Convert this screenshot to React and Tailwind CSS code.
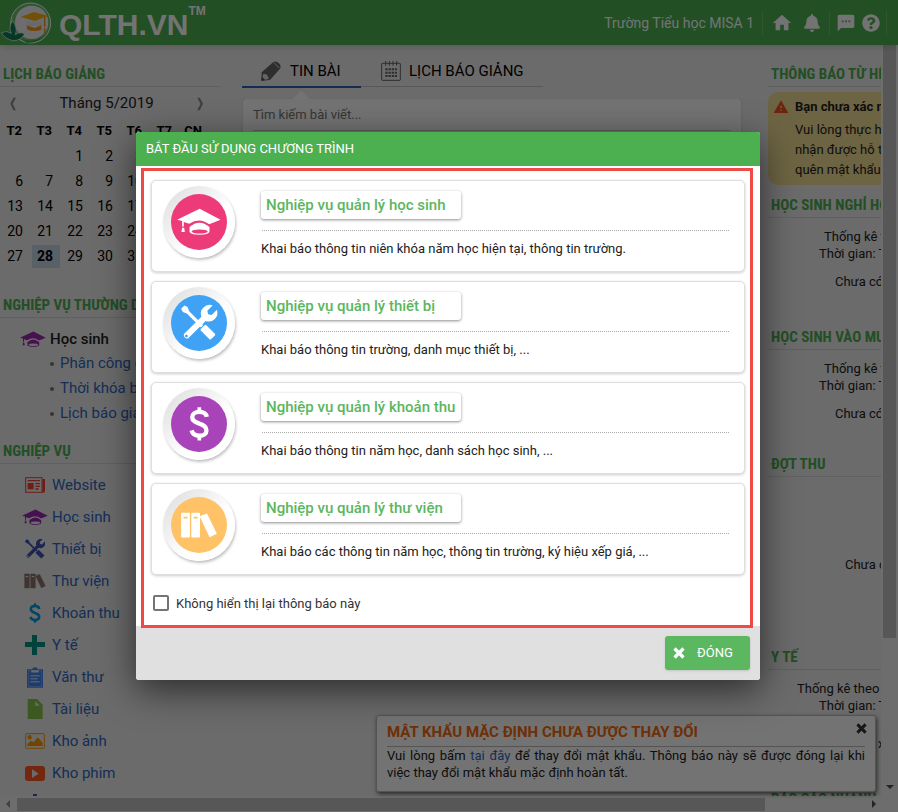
import { useState } from "react";
import { FaBell, FaQuestionCircle } from "react-icons/fa";
import { MdHome, MdSms, MdWarning } from "react-icons/md";

/* ---------- icon shapes, drawn on a 166 x 166 disc ---------- */

function CapShape({ hole }) {
  return (
    <>
      <path d="M18 76L85 44L147 76L113 90Q85 68 54 88L38 83V96H33V80Z" fill="currentColor" />
      <path d="M33 100h6l2 13H31z" fill="currentColor" />
      <path d="M55 98Q84 72 114 98V112Q112 121 85 121Q57 121 55 112Z" fill="currentColor" />
      <ellipse cx="85" cy="111" rx="24" ry="6" fill={hole} />
    </>
  );
}

function ToolsShape({ hole }) {
  return (
    <g transform="translate(83 84)" fill="currentColor">
      <g transform="rotate(45)">
        <path d="M-9 -66A26 26 0 0 0 -9 -19V54A10 10 0 0 0 9 54V-19A26 26 0 0 0 9 -66V-44L0 -38L-9 -44Z" />
        <circle cx="0" cy="53" r="4" fill={hole} />
      </g>
      <g transform="rotate(-45)">
        <path d="M-7 -68H7L10 -58L5 -46V14H-5V-46L-10 -58Z" />
        <rect x="-13" y="14" width="26" height="46" rx="5" stroke={hole} strokeWidth="3" />
      </g>
    </g>
  );
}

function DollarShape() {
  return (
    <g fill="none" stroke="currentColor" strokeWidth="13">
      <path d="M84 33V48M84 117V132" strokeWidth="11" />
      <path d="M106 62C104 51 95 47 84 47C71 47 63 54 63 63C63 74 73 78 84 82C97 86 105 91 105 102C105 112 97 118 84 118C72 118 64 113 61 102" />
    </g>
  );
}

function BooksShape({ hole }) {
  return (
    <>
      <g fill="currentColor">
        <rect x="30" y="47" width="26" height="73" rx="3" />
        <rect x="60" y="47" width="26" height="73" rx="3" />
        <path d="M87 58L106 51L134 108L115 117Z" stroke="currentColor" strokeWidth="3" strokeLinejoin="round" />
      </g>
      <path d="M37 61H49M67 61H79" stroke={hole} strokeWidth="5" />
    </>
  );
}

function CrossIcon({ className }) {
  return (
    <svg className={className} viewBox="0 0 12 12">
      <path d="M1.5 1.5L10.5 10.5M10.5 1.5L1.5 10.5" stroke="currentColor" strokeWidth="3.2" />
    </svg>
  );
}

function Logo() {
  return (
    <svg className="h-[42px] w-[52px]" viewBox="0 0 156 126">
      <circle cx="92" cy="63" r="60" fill="#6fbf73" stroke="#fff" strokeWidth="3" />
      <circle cx="95" cy="61" r="50" fill="#f2f2f2" />
      <path d="M45 98Q70 122 110 113Q132 106 143 88Q120 126 80 122Z" fill="#3ba54b" />
      <path d="M4 92Q20 84 34 94Q24 76 38 56Q54 80 46 98Q60 88 74 96Q62 116 40 116Q16 112 4 92Z" fill="#0d7f55" stroke="#fff" strokeWidth="2" />
      <path d="M62 45L102 30L146 42L104 57Z" fill="#fbb416" />
      <path d="M80 55L104 62L126 55V74L104 70L80 74Z" fill="#e9e9e9" />
      <path d="M80 70L104 78L124 70V83Q104 91 82 83Z" fill="#f59a1d" />
      <path d="M134 46V74M134 78V94" stroke="#f08a1d" strokeWidth="4" />
    </svg>
  );
}

function PencilIcon() {
  return (
    <svg className="size-5" viewBox="0 0 60 60">
      <path d="M1 59L2 34L36 4Q44 -2 53 6Q62 14 57 23L27 57Z" fill="#666" />
      <path d="M6 40Q20 36 23 54L12 56L5 50Z" fill="#ddd" />
      <path d="M1 59L2 48L13 58Z" fill="#555" />
      <path d="M39 5L55 21" stroke="#ddd" strokeWidth="3" />
    </svg>
  );
}

function CalendarIcon() {
  return (
    <svg className="size-5" viewBox="0 0 60 60" fill="none" stroke="#666" strokeWidth="3">
      <rect x="2" y="7" width="56" height="51" rx="2" />
      <path d="M14 0V14M25 0V14M36 0V14M47 0V14" />
      <path d="M13 25H48M13 35H48M13 45H48" strokeWidth="6" strokeDasharray="7 2.5" />
    </svg>
  );
}

const menuIcons = {
  website: (
    <svg className="h-4 w-5" viewBox="0 0 60 48">
      <path d="M52 6H60V42Q60 48 52 48Z" fill="#f44336" />
      <rect x="2" y="2" width="49" height="44" fill="none" stroke="#f44336" strokeWidth="3" />
      <rect x="8" y="18" width="18" height="19" fill="#f44336" />
      <path d="M8 11H45M31 20H45M31 28H45M31 36H41" stroke="#f44336" strokeWidth="4" />
    </svg>
  ),
  student: (
    <svg className="h-4 w-[26px] text-[#9c27b0]" viewBox="18 42 130 80">
      <CapShape hole="#ededed" />
    </svg>
  ),
  device: (
    <svg className="size-5 text-[#3f51b5]" viewBox="30 30 106 106">
      <ToolsShape hole="#ededed" />
    </svg>
  ),
  library: (
    <svg className="h-4 w-[22px] text-[#8d7468]" viewBox="28 45 110 77">
      <BooksShape hole="#ededed" />
    </svg>
  ),
  money: (
    <svg className="h-5 w-3 text-[#039be5]" viewBox="54 32 60 101">
      <DollarShape />
    </svg>
  ),
  health: (
    <svg className="size-5" viewBox="0 0 20 20">
      <path d="M7 0H12V7H20V12H12V20H7V12H0V7H7Z" fill="#009688" />
    </svg>
  ),
  document: (
    <svg className="h-[21px] w-4" viewBox="0 0 48 62">
      <path d="M0 6H15Q18 0 24 0T33 6H48V62H0Z" fill="#4285f4" />
      <rect x="4" y="11" width="40" height="47" fill="none" stroke="#8db4f8" strokeWidth="2" />
      <path d="M13 9H35V16H13Z" fill="#ededed" />
      <path d="M10 26H38M10 35H32M10 44H38" stroke="#ededed" strokeWidth="3" />
    </svg>
  ),
  file: (
    <svg className="h-5 w-4" viewBox="0 0 48 60">
      <path d="M2 0H30L47 17V60H2Z" fill="#8bc34a" />
      <path d="M25 7V20H38Z" fill="#ededed" />
    </svg>
  ),
  photo: (
    <svg className="h-4 w-5" viewBox="0 0 60 48">
      <rect x="2" y="2" width="56" height="44" rx="2" fill="none" stroke="#ff9800" strokeWidth="3" />
      <ellipse cx="14" cy="13" rx="6" ry="7" fill="#ff9800" />
      <path d="M7 39V33L18 23L26 28L38 13L53 29V39Z" fill="#ff9800" />
    </svg>
  ),
  video: (
    <svg className="h-[15px] w-5" viewBox="0 0 60 45">
      <rect width="60" height="45" rx="9" fill="#ff5722" />
      <path d="M21 10L41 23L21 36Z" fill="#ededed" />
    </svg>
  ),
  settings: (
    <svg className="size-[22px]" viewBox="0 0 22 22">
      <path d="M9 0H13V4L18 6V16L11 20L4 16V6L9 4Z" fill="#3f51b5" />
    </svg>
  ),
};

/* ---------- data ---------- */

const weekdays = ["T2", "T3", "T4", "T5", "T6", "T7", "CN"];
const weeks = [
  ["", "", 1, 2, 3, 4, 5],
  [6, 7, 8, 9, 10, 11, 12],
  [13, 14, 15, 16, 17, 18, 19],
  [20, 21, 22, 23, 24, 25, 26],
  [27, 28, 29, 30, 31, "", ""],
];

const menu = [
  { icon: "website", label: "Website" },
  { icon: "student", label: "Học sinh" },
  { icon: "device", label: "Thiết bị" },
  { icon: "library", label: "Thư viện" },
  { icon: "money", label: "Khoản thu" },
  { icon: "health", label: "Y tế" },
  { icon: "document", label: "Văn thư" },
  { icon: "file", label: "Tài liệu" },
  { icon: "photo", label: "Kho ảnh" },
  { icon: "video", label: "Kho phim" },
];

const tasks = [
  {
    title: "Nghiệp vụ quản lý học sinh",
    text: "Khai báo thông tin niên khóa năm học hiện tại, thông tin trường.",
    disc: "bg-[#ec3b78]",
    shape: <CapShape hole="#ec3b78" />,
  },
  {
    title: "Nghiệp vụ quản lý thiết bị",
    text: "Khai báo thông tin trường, danh mục thiết bị, ...",
    disc: "bg-[#3fa2f5]",
    shape: <ToolsShape hole="#3fa2f5" />,
  },
  {
    title: "Nghiệp vụ quản lý khoản thu",
    text: "Khai báo thông tin năm học, danh sách học sinh, ...",
    disc: "bg-[#a843b9]",
    shape: <DollarShape />,
  },
  {
    title: "Nghiệp vụ quản lý thư viện",
    text: "Khai báo các thông tin năm học, thông tin trường, ký hiệu xếp giá, ...",
    disc: "bg-[#ffc266]",
    shape: <BooksShape hole="#ffc266" />,
  },
];

/* ---------- page ---------- */

function SectionTitle({ children, className = "" }) {
  return (
    <h2 className={`h-[26px] border-b border-[#d6d6d6] pt-px pl-[3px] font-['Roboto_Condensed','Liberation_Sans_Narrow',Roboto,sans-serif] text-[15px] leading-[25px] font-bold whitespace-nowrap text-[#4caf50] ${className}`}>
      {children}
    </h2>
  );
}

function Header() {
  return (
    <header className="z-10 flex h-[45px] shrink-0 items-center bg-[#4caf50] text-white shadow-md">
      <a href="#" className="flex items-center">
        <Logo />
        <span className="pt-1 pl-[7px] font-['Liberation_Sans',sans-serif] text-[30px] leading-9 font-bold">QLTH.VN</span>
        <span className="mb-6 font-['Liberation_Sans',sans-serif] text-xs leading-3 font-bold">TM</span>
      </a>
      <div className="ml-auto flex h-6 items-center text-sm">
        <span className="pr-2">Trường Tiểu học MISA 1</span>
        <div className="flex h-6 items-center gap-[10px] border-l border-white/20 px-2">
          <button aria-label="Trang chủ"><MdHome className="size-[22px]" /></button>
          <button aria-label="Thông báo"><FaBell className="size-[18px]" /></button>
        </div>
        <div className="flex h-6 items-center gap-[6px] border-l border-white/20 px-[6px]">
          <button aria-label="Tin nhắn"><MdSms className="size-5" /></button>
          <button aria-label="Trợ giúp"><FaQuestionCircle className="size-[18px]" /></button>
        </div>
        <div className="h-6 w-3 border-l border-white/20" />
      </div>
    </header>
  );
}

function Calendar() {
  return (
    <>
      <div className="flex h-8 items-center justify-between px-2 text-[15px] text-[#222]">
        <button aria-label="Tháng trước" className="text-xs font-bold text-[#888]">❬</button>
        <span>Tháng 5/2019</span>
        <button aria-label="Tháng sau" className="pr-2 text-xs font-bold text-[#888]">❭</button>
      </div>
      <table className="w-[210px] table-fixed text-sm text-black">
        <thead>
          <tr className="h-[25px] text-[13px]">
            {weekdays.map((d) => (
              <th key={d} className="p-0 pr-2 text-right font-bold">{d}</th>
            ))}
          </tr>
        </thead>
        <tbody>
          {weeks.map((week, i) => (
            <tr key={i} className="h-[25px]">
              {week.map((day, j) => (
                <td key={j} className="p-0 pl-[2px] text-right">
                  <span className={`block h-[23px] pr-[7px] leading-[23px] ${day === 28 ? "bg-[#c3d4e6] font-bold" : ""}`}>{day}</span>
                </td>
              ))}
            </tr>
          ))}
        </tbody>
      </table>
    </>
  );
}

function LeftColumn() {
  return (
    <aside className="w-[221px] shrink-0 pt-4">
      <SectionTitle>LỊCH BÁO GIẢNG</SectionTitle>
      <Calendar />
      <SectionTitle className="mt-[23px]">NGHIỆP VỤ THƯỜNG DÙNG</SectionTitle>
      <div className="mt-[9px] flex h-6 items-center gap-1 pl-5 text-[15px] font-medium text-[#222]">
        {menuIcons.student}
        Học sinh
      </div>
      <ul className="text-[15px] text-[#3068c0]">
        {["Phân công giảng dạy", "Thời khóa biểu", "Lịch báo giảng"].map((t) => (
          <li key={t} className="flex h-[25px] items-center gap-[6px] pl-[50px]">
            <span className="size-1 rounded-full bg-[#777]" />
            <a href="#">{t}</a>
          </li>
        ))}
      </ul>
      <SectionTitle className="mt-3">NGHIỆP VỤ</SectionTitle>
      <nav className="mt-[5px] text-[15px] text-[#3068c0]">
        {menu.map((m) => (
          <a key={m.label} href="#" className="flex h-8 items-center pl-5">
            <span className="mr-[2px] flex w-[30px] justify-center">{menuIcons[m.icon]}</span>
            {m.label}
          </a>
        ))}
        <a href="#" aria-label="Thiết lập" className="flex h-8 items-center pl-6">{menuIcons.settings}</a>
      </nav>
    </aside>
  );
}

function MiddleColumn() {
  return (
    <main className="min-w-0 flex-1 pt-[10px]">
      <div className="mr-[198px] flex h-8 border-b border-[#c4c4c4] text-[15px] whitespace-nowrap text-black">
        <button className="flex h-[33px] w-[119px] items-center gap-[9px] border-b-2 border-[#2f62b4] pt-px pl-[19px]">
          <PencilIcon />
          TIN BÀI
        </button>
        <button className="flex items-center gap-2 pt-px pl-5">
          <CalendarIcon />
          LỊCH BÁO GIẢNG
        </button>
      </div>
      <div className="relative mt-3 ml-px h-[480px] rounded bg-white px-[10px] shadow">
        <span className="absolute -top-[6px] left-[52px] size-3 rotate-45 bg-white" />
        <input
          type="text"
          aria-label="Tìm kiếm bài viết"
          placeholder="Tìm kiếm bài viết..."
          className="relative h-8 w-full border-b border-[#ccc] bg-transparent text-[13px] placeholder-[#777] outline-none"
        />
      </div>
    </main>
  );
}

function Stats({ first = "Thống kê theo", indent = "pl-14" }) {
  return (
    <div className="mt-[10px] text-[13px] leading-[17px]">
      <p className={indent}>{first}</p>
      <p className="pl-[51px]">Thời gian: Từ</p>
    </div>
  );
}

function RightColumn() {
  return (
    <aside className="w-[221px] shrink-0 pt-4 whitespace-nowrap text-[#222]">
      <SectionTitle>THÔNG BÁO TỪ HỆ THỐNG</SectionTitle>
      <div className="mt-[5px] rounded-[10px] bg-[#f1dd94] pt-[5px] pb-[5px] pl-[5px] text-[13px] leading-5">
        <p className="flex items-center gap-[6px] font-bold">
          <MdWarning className="size-4 text-[#f4511e]" />
          Bạn chưa xác minh
        </p>
        <p className="mt-[3px] pl-[22px]">
          Vui lòng thực hiện
          <br />
          nhận được hỗ trợ
          <br />
          quên mật khẩu
        </p>
      </div>
      <SectionTitle className="mt-[7px]">HỌC SINH NGHỈ HỌC</SectionTitle>
      <Stats />
      <p className="mt-[11px] pl-[67px] text-[13px] leading-[17px]">Chưa có dữ liệu</p>
      <SectionTitle className="mt-[34px]">HỌC SINH VÀO MUỘN</SectionTitle>
      <Stats />
      <p className="mt-[11px] pl-[67px] text-[13px] leading-[17px]">Chưa có dữ liệu</p>
      <SectionTitle className="mt-[29px]">ĐỢT THU</SectionTitle>
      <p className="mt-[79px] pl-[77px] text-[13px] leading-[17px]">Chưa có</p>
      <SectionTitle className="mt-[71px]">Y TẾ</SectionTitle>
      <Stats indent="pl-[29px]" />
      <p className="mt-[21px] pl-[110px] text-[13px] leading-[17px]">x</p>
      <SectionTitle className="mt-[34px]">BÁO CÁO NHANH</SectionTitle>
    </aside>
  );
}

function PasswordNotice() {
  return (
    <section className="absolute right-[22px] bottom-5 z-20 w-[500px] rounded-[3px] border border-[#bbb] bg-white px-[10px] pt-[5px] pb-[10px] shadow-[1px_2px_4px_rgba(0,0,0,0.6)]">
      <div className="flex h-[26px] items-start justify-between border-b border-[#bbb]">
        <h3 className="text-[15px] leading-[22px] font-bold text-[#f56a0c]">MẬT KHẨU MẶC ĐỊNH CHƯA ĐƯỢC THAY ĐỔI</h3>
        <button aria-label="Đóng thông báo" className="-mr-[2px] pt-[2px] text-[#333]"><CrossIcon className="size-[11px]" /></button>
      </div>
      <p className="text-justify text-[13px] leading-[17px] text-[#222]">
        Vui lòng bấm <a href="#" className="text-[#3068c0]">tại đây</a> để thay đổi mật khẩu. Thông báo này sẽ được đóng lại khi
        việc thay đổi mật khẩu mặc định hoàn tất.
      </p>
    </section>
  );
}

function TaskCard({ task }) {
  return (
    <li className="flex h-[92px] rounded-[5px] border border-[#dedede] bg-white pt-[5px] pr-[15px] pl-[11px] shadow-[0_1px_3px_rgba(0,0,0,0.2)]">
      <span className="flex size-[72px] shrink-0 items-center justify-center rounded-full bg-linear-to-br from-[#dcdcdc] to-white to-60% shadow-[1px_2px_3px_rgba(0,0,0,0.25)]">
        <span className={`size-14 rounded-full text-white ${task.disc}`}>
          <svg className="size-14" viewBox="0 0 166 166">{task.shape}</svg>
        </span>
      </span>
      <div className="min-w-0 flex-1 pt-[5px] pl-[26px]">
        <button className="block h-7 w-[200px] rounded-[3px] bg-white pl-[5px] text-left text-[15px] font-medium text-[#5cb660] shadow-[0_1px_3px_rgba(0,0,0,0.45)]">
          {task.title}
        </button>
        <p className="mt-[11px] ml-px border-t border-dotted border-[#aaa]" />
        <p className="pt-2 text-[13px] leading-5 text-[#222]">{task.text}</p>
      </div>
    </li>
  );
}

function StartDialog({ onClose }) {
  const [hidden, setHidden] = useState(false);

  return (
    <div className="absolute inset-0 z-30 flex items-center justify-center bg-black/55 pr-[2px]">
      <div role="dialog" aria-labelledby="dialog-title" className="w-[624px] rounded-[3px] bg-white shadow-[0_10px_36px_rgba(0,0,0,0.6)]">
        <h1 id="dialog-title" className="h-[34px] rounded-t-[3px] bg-[#4caf50] px-[10px] text-[13px] leading-[34px] text-white">
          BẮT ĐẦU SỬ DỤNG CHƯƠNG TRÌNH
        </h1>
        <div className="relative px-[15px] pt-[14px] pb-[14px]">
          {/* highlight frame, runs slightly over the footer */}
          <div className="pointer-events-none absolute top-[2px] right-[7px] -bottom-[2px] left-[5px] border-3 border-[#ee4b46]" />
          <ul className="flex flex-col gap-[9px]">
            {tasks.map((task) => (
              <TaskCard key={task.title} task={task} />
            ))}
          </ul>
          <label className="mt-[19px] ml-[2px] flex h-[18px] items-center gap-[7px] text-[13px] text-[#333]">
            <input
              type="checkbox"
              checked={hidden}
              onChange={(e) => setHidden(e.target.checked)}
              className="size-4 appearance-none rounded-[2px] border-2 border-[#757575] bg-white checked:bg-[#4caf50]"
            />
            <span className="pt-px">Không hiển thị lại thông báo này</span>
          </label>
        </div>
        <div className="flex h-[54px] items-center justify-end rounded-b-[3px] bg-[#e0e0e0] pr-[10px]">
          <button onClick={onClose} className="flex h-[34px] w-[85px] items-center gap-3 rounded-[3px] bg-[#5cb860] pl-2 text-[13px] text-white shadow">
            <CrossIcon className="size-3" />
            ĐÓNG
          </button>
        </div>
      </div>
    </div>
  );
}

export default function App() {
  const [open, setOpen] = useState(true);

  return (
    <div className="relative flex h-screen flex-col overflow-hidden bg-[#ededed] font-[Roboto,sans-serif]">
      <Header />
      <div className="flex min-h-0 flex-1">
        <div className="min-w-0 flex-1 overflow-hidden">
          <div className="flex min-w-[989px]">
            <LeftColumn />
            <div className="w-[21px] shrink-0" />
            <MiddleColumn />
            <div className="w-[27px] shrink-0" />
            <RightColumn />
          </div>
        </div>
        {/* vertical scrollbar */}
        <div className="flex w-[17px] shrink-0 flex-col items-center bg-[#f1f1f1]">
          <div className="h-[79%] w-[13px] bg-[#c1c1c1]" />
          <span className="mt-auto mb-[7px] border-x-4 border-t-4 border-x-transparent border-t-[#505050]" />
        </div>
      </div>
      {/* horizontal scrollbar */}
      <div className="flex h-4 shrink-0 items-center bg-[#f1f1f1] pr-[22px] pl-[6px]">
        <span className="border-y-4 border-r-4 border-y-transparent border-r-[#909090]" />
        <div className="ml-[7px] h-[13px] w-[86%] bg-[#c1c1c1]" />
        <span className="ml-auto border-y-4 border-l-4 border-y-transparent border-l-[#505050]" />
      </div>
      <PasswordNotice />
      {open && <StartDialog onClose={() => setOpen(false)} />}
    </div>
  );
}
